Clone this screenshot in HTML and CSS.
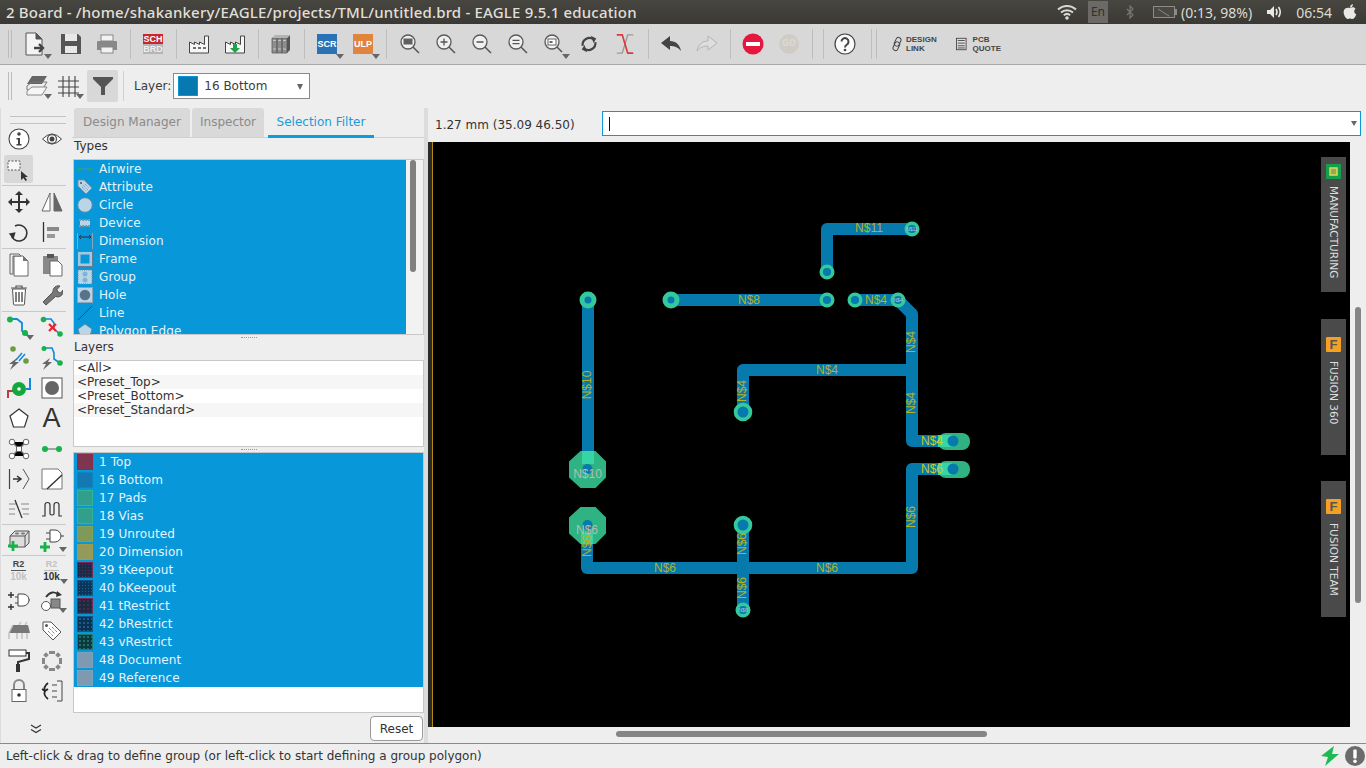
FILE: index.html
```html
<!DOCTYPE html>
<html lang="en">
<head>
<meta charset="utf-8">
<title>EAGLE Board</title>
<link rel="stylesheet" href="styles.css">
</head>
<body>
<header class="titlebar">
  <div class="title">2 Board - /home/shakankery/EAGLE/projects/TML/untitled.brd - EAGLE 9.5.1 education</div>
  <div class="tray">
    <svg class="t-wifi" width="20" height="16" viewBox="0 0 20 16"><path d="M1 5.5a13 13 0 0 1 18 0M4 8.5a9 9 0 0 1 12 0M6.8 11.2a5 5 0 0 1 6.4 0" fill="none" stroke="#d8d8d4" stroke-width="2"/><circle cx="10" cy="14" r="1.8" fill="#d8d8d4"/></svg>
    <span class="t-en">En</span>
    <svg class="t-bt" width="8" height="14" viewBox="0 0 8 14"><path d="M1 4l6 6-3 3V1l3 3-6 6" fill="none" stroke="#77766f" stroke-width="1.2"/></svg>
    <svg class="t-bat" width="24" height="14" viewBox="0 0 24 14"><rect x=".5" y="1.5" width="21" height="11" fill="#4a4944" stroke="#8c8b85"/><path d="M5 4l11 7" stroke="#8c8b85"/><rect x="22" y="4" width="2" height="6" fill="#8c8b85"/></svg>
    <span class="t-text t-pct">(0:13, 98%)</span>
    <svg class="t-snd" width="18" height="14" viewBox="0 0 18 14"><path d="M1 5h3l4-4v12l-4-4H1z" fill="#e8e8e4"/><path d="M10 4q2 3 0 6M12.5 2q3.5 5 0 10" fill="none" stroke="#e8e8e4" stroke-width="1.6"/></svg>
    <span class="t-text t-clock">06:54</span>
    <svg class="t-gear" width="14" height="16" viewBox="0 0 14 16"><path d="M7 4c2-1 4-1 5.500.8-2 1.500-1.500 4.500.8 5.400-1 2.800-2.500 4.800-4 4.800-1 0-1.500-.6-2.300-.6s-1.300.6-2.300.6C3 15 .6 11 .6 8 .6 4.500 4 3 7 4zM7 3.400C7 1.800 8.200.4 10 .2c0 1.800-1.300 3.200-3 3.200z" fill="#e8e8e4"/></svg>
  </div>
</header>

<div class="toolbar tb1">
  <i class="grip"></i>
  <button class="tb"><svg width="26" height="26" viewBox="0 0 26 26"><path d="M4 2h10l6 6v16H4z" fill="#f4f4f4" stroke="#555"/><path d="M14 2v6h6" fill="#555" stroke="#555"/><path d="M12 17h8M17 13l4 4-4 4" fill="none" stroke="#444" stroke-width="2.400"/></svg><b class="drop"></b></button>
  <button class="tb"><svg width="24" height="24" viewBox="0 0 24 24"><path d="M2 2h17l3 3v17H2z" fill="#555"/><rect x="6" y="2" width="12" height="7" fill="#e8e8e8"/><rect x="6" y="14" width="12" height="7" fill="#e8e8e8"/></svg></button>
  <button class="tb"><svg width="24" height="24" viewBox="0 0 24 24"><rect x="6" y="3" width="12" height="6" fill="#f2f2f2" stroke="#888"/><path d="M3 9h18a1 1 0 0 1 1 1v8h-4v-3H6v3H2v-8a1 1 0 0 1 1-1z" fill="#888"/><rect x="6" y="15" width="12" height="6" fill="#f2f2f2" stroke="#888"/></svg></button>
  <i class="sep"></i>
  <button class="tb"><span class="schbrd"><span class="sch">SCH</span><span class="brd">BRD</span></span></button>
  <i class="sep"></i>
  <button class="tb"><svg width="22" height="22" viewBox="0 0 22 22"><path d="M1.500 20V9l5 2.500V9l5 2.500V9l5 2.500V3h4v17z" fill="#f6f6f6" stroke="#444"/><path d="M5 15h3M10 15h3M15 15h3" stroke="#444" stroke-width="1.500"/></svg></button>
  <button class="tb"><svg width="22" height="22" viewBox="0 0 22 22"><path d="M1.500 20V9l5 2.500V9l5 2.500V9l5 2.500V3h4v17z" fill="#f6f6f6" stroke="#444"/><path d="M9 11h4v4h3l-5 5-5-5h3z" fill="#1fa34a"/></svg></button>
  <i class="sep"></i>
  <button class="tb"><svg width="20" height="20" viewBox="0 0 20 20"><path d="M1 4h5v15H1zM6 4h5v15H6zM11 4h5v15h-5z" fill="#8e8e8e" stroke="#5e5e5e" stroke-width=".8"/><path d="M2 6.500h3M7 6.500h3M12 6.500h3M2 15h3M7 15h3M12 15h3" stroke="#c4c4c4"/><path d="M16 4l3-3v15l-3 3z" fill="#555"/><path d="M1 4l3-3h15l-3 3z" fill="#b4b4b4"/></svg></button>
  <i class="sep"></i>
  <button class="tb"><span class="script scr">SCR</span><b class="drop"></b></button>
  <button class="tb"><span class="script ulp">ULP</span><b class="drop"></b></button>
  <i class="sep"></i>
  <button class="tb"><svg width="24" height="24" viewBox="0 0 24 24"><circle cx="11" cy="10" r="7" fill="#f0f0f0" stroke="#5a5a5a" stroke-width="1.300"/><rect x="6.500" y="6.500" width="9" height="6" fill="#606060"/><path d="M16 15l6 6" stroke="#555" stroke-width="1.500"/></svg></button>
  <button class="tb"><svg width="24" height="24" viewBox="0 0 24 24"><circle cx="11" cy="10" r="7" fill="#f0f0f0" stroke="#5a5a5a" stroke-width="1.300"/><path d="M7.500 10h7M11 6.500v7" stroke="#555" stroke-width="1.300"/><path d="M16 15l6 6" stroke="#555" stroke-width="1.500"/></svg></button>
  <button class="tb"><svg width="24" height="24" viewBox="0 0 24 24"><circle cx="11" cy="10" r="7" fill="#f0f0f0" stroke="#5a5a5a" stroke-width="1.300"/><path d="M7.500 10h7" stroke="#555" stroke-width="1.500"/><path d="M16 15l6 6" stroke="#555" stroke-width="1.500"/></svg></button>
  <button class="tb"><svg width="24" height="24" viewBox="0 0 24 24"><circle cx="11" cy="10" r="7" fill="#f0f0f0" stroke="#5a5a5a" stroke-width="1.300"/><path d="M7.500 8.300h7M7.500 11.700h7" stroke="#555" stroke-width="1.300"/><path d="M16 15l6 6" stroke="#555" stroke-width="1.500"/></svg></button>
  <button class="tb"><svg width="24" height="24" viewBox="0 0 24 24"><circle cx="11" cy="10" r="7" fill="#f0f0f0" stroke="#5a5a5a" stroke-width="1.300"/><rect x="7" y="7" width="8" height="6" fill="#fff" stroke="#666"/><rect x="8.500" y="9" width="3" height="2" fill="#666"/><path d="M16 15l5 5" stroke="#555" stroke-width="1.500"/></svg><b class="drop"></b></button>
  <button class="tb"><svg width="20" height="20" viewBox="0 0 22 22"><path d="M4 13a7.500 7.500 0 0 1 12-7M18 9a7.500 7.500 0 0 1-12 7" fill="none" stroke="#444" stroke-width="2.400"/><path d="M13 2l6 3-3 5zM9 20l-6-3 3-5z" fill="#444"/></svg></button>
  <button class="tb"><svg width="22" height="22" viewBox="0 0 24 24"><path d="M21 2h-6L9 22H3" fill="none" stroke="#999" stroke-width="1.500"/><path d="M3 2h6l6 20h6" fill="none" stroke="#d93a3a" stroke-width="1.800"/></svg></button>
  <i class="sep"></i>
  <button class="tb"><svg width="22" height="18" viewBox="0 0 22 18"><path d="M10 1L1 8l9 7v-4c4 0 8 1 11 5-1-6-5-10-11-10z" fill="#444"/></svg></button>
  <button class="tb"><svg width="22" height="18" viewBox="0 0 22 18"><path d="M12 1l9 7-9 7v-4c-4 0-8 1-11 5 1-6 5-10 11-10z" fill="#dedede" stroke="#b4b4b4"/></svg></button>
  <i class="sep"></i>
  <button class="tb"><svg width="22" height="22" viewBox="0 0 22 22"><circle cx="11" cy="11" r="10.500" fill="#e5173f"/><rect x="4" y="9" width="14" height="4" fill="#fff"/></svg></button>
  <button class="tb"><span class="go">GO</span></button>
  <i class="sep"></i><i class="sep sep2"></i>
  <button class="tb"><svg width="22" height="22" viewBox="0 0 22 22"><circle cx="11" cy="11" r="10" fill="#fafafa" stroke="#444" stroke-width="1.200"/><path d="M7.500 8.500a3.500 3.500 0 1 1 5.500 3c-1.400 1-2 1.500-2 3" fill="none" stroke="#444" stroke-width="2"/><circle cx="11" cy="17" r="1.300" fill="#444"/></svg></button>
  <i class="sep sep3"></i><i class="sep sep4"></i>
  <div class="linkbtn link1"><svg width="12" height="16" viewBox="0 0 12 16"><rect x="4" y="1" width="5" height="9" rx="2.500" transform="rotate(25 6 6)" fill="none" stroke="#444"/><rect x="3" y="6" width="5" height="9" rx="2.500" transform="rotate(25 6 10)" fill="none" stroke="#444"/></svg><span>DESIGN<br>LINK</span></div>
  <div class="linkbtn link2"><svg width="12" height="14" viewBox="0 0 12 14"><rect x=".5" y=".5" width="11" height="13" fill="#ddd" stroke="#444"/><path d="M2 3h8M2 6h8M2 9h8M2 11.500h8" stroke="#444"/></svg><span>PCB<br>QUOTE</span></div>
</div>

<div class="toolbar tb2">
  <i class="grip"></i>
  <button class="tb2b b1"><svg width="24" height="24" viewBox="0 0 24 24"><path d="M7 2h15l-5 8H2z" fill="#666"/><path d="M2 12l5-4h15l-5 8H2z" fill="none" stroke="#777"/><path d="M2 17l5-4h15l-5 8H2z" fill="#f6f6f6" stroke="#888"/></svg><b class="drop"></b></button>
  <button class="tb2b b2"><svg width="24" height="24" viewBox="0 0 24 24"><path d="M1 7h21M1 13h21M1 19h21M6 2v21M12 2v21M18 2v21" stroke="#444" stroke-width="1.100"/></svg><b class="drop"></b></button>
  <button class="tb2b filter"><svg width="22" height="20" viewBox="0 0 22 20"><path d="M1 1h20v2l-8 8v8H9v-8L1 3z" fill="#555"/></svg></button>
  <i class="sep sepb"></i>
  <label class="layer-label">Layer:</label>
  <div class="combo"><span class="combo-sw"></span><span class="combo-t">16 Bottom</span><b class="combo-arrow"></b></div>
</div>

<main class="main">
  <nav class="tools">
    <div class="tgrip"></div>
    <div class="tsec">
      <span class="ti"><svg width="22" height="22" viewBox="0 0 22 22"><circle cx="11" cy="11" r="10" fill="#fff" stroke="#444" stroke-width="1.100"/><circle cx="11" cy="6" r="1.800" fill="#444"/><path d="M8.500 10H12v6h1.500v1.500h-5V16H10v-4.500H8.500z" fill="#444"/></svg></span>
      <span class="ti"><svg width="22" height="16" viewBox="0 0 22 16"><path d="M1.500 8Q11-2 20.500 8 11 18 1.500 8z" fill="#fff" stroke="#444"/><circle cx="11" cy="8" r="4.500" fill="none" stroke="#555" stroke-width="1.300"/><circle cx="11" cy="8" r="2.500" fill="#444"/></svg></span>
      <span class="ti sel"><svg width="28" height="24" viewBox="0 0 28 24"><rect x="3" y="4" width="12" height="9" fill="#f6f6f6" stroke="#555" stroke-dasharray="2 1.500"/><path d="M16 14v9l2.500-2 2 3 1.500-1-2-3h3z" fill="#333"/></svg></span>
      <span class="ti"></span>
    </div>
    <hr class="thr">
    <div class="tsec">
      <span class="ti"><svg width="24" height="24" viewBox="0 0 24 24"><path d="M12 1l4 4h-3v6h6V8l4 4-4 4v-3h-6v6h3l-4 4-4-4h3v-6H5v3l-4-4 4-4v3h6V5H8z" fill="#333"/></svg></span>
      <span class="ti"><svg width="24" height="24" viewBox="0 0 24 24"><path d="M10 3v18H2z" fill="#fff" stroke="#666"/><path d="M14 3v18h8z" fill="#666" stroke="#666"/></svg></span>
      <span class="ti"><svg width="22" height="22" viewBox="0 0 22 22"><path d="M7 5a8 8 0 1 1-4 8" fill="none" stroke="#333" stroke-width="1.600"/><path d="M1 12h7l-3 6z" fill="#333" transform="rotate(-10 4 14)"/></svg></span>
      <span class="ti"><svg width="22" height="22" viewBox="0 0 22 22"><path d="M2.500 1v20" stroke="#333" stroke-width="1.300"/><rect x="6" y="6" width="12" height="4" fill="#888"/><rect x="6" y="13" width="8" height="4" fill="#999"/></svg></span>
    </div>
    <hr class="thr">
    <div class="tsec">
      <span class="ti"><svg width="22" height="24" viewBox="0 0 22 24"><path d="M6 3h9l5 5v15H6z" fill="#fff" stroke="#666"/><path d="M2 1h9l2 2H5v18H2z" fill="#eee" stroke="#666"/><path d="M15 3v5h5" fill="#777"/></svg></span>
      <span class="ti"><svg width="22" height="24" viewBox="0 0 22 24"><rect x="2" y="3" width="15" height="18" fill="#888"/><rect x="6" y="1" width="7" height="4" fill="#555"/><path d="M9 8h8l4 4v11H9z" fill="#fff" stroke="#666"/></svg></span>
      <span class="ti"><svg width="20" height="22" viewBox="0 0 20 22"><path d="M2 4h16M7 4V2h6v2" fill="none" stroke="#555" stroke-width="1.200"/><path d="M3.500 5l1 15a1 1 0 0 0 1 1h9a1 1 0 0 0 1-1l1-15z" fill="#fff" stroke="#555"/><path d="M7 8v10M10 8v10M13 8v10" stroke="#555" stroke-width="1.500"/></svg></span>
      <span class="ti"><svg width="22" height="22" viewBox="0 0 22 22"><path d="M2 18L12 8a5.500 5.500 0 0 1 7-6l-3 3.500 1 2.500 2.500 1L22 6a5.500 5.500 0 0 1-7.500 6.500L5 21z" fill="#777" stroke="#555"/></svg></span>
    </div>
    <hr class="thr">
    <div class="tsec tsec4">
      <span class="ti"><svg width="26" height="24" viewBox="0 0 26 24"><path d="M3 3h8l5 4v8l6 4" fill="none" stroke="#1188dd" stroke-width="1.800"/><circle cx="4" cy="3.500" r="3" fill="#18b24b"/><circle cx="19" cy="17" r="3" fill="#18b24b"/></svg><b class="drop"></b></span>
      <span class="ti"><svg width="24" height="24" viewBox="0 0 24 24"><path d="M3 3h8l3 4v6l6 5" fill="none" stroke="#1188dd" stroke-width="1.600"/><circle cx="3.500" cy="3.500" r="2.800" fill="#18b24b"/><circle cx="20" cy="18" r="2.800" fill="#18b24b"/><path d="M9 8l7 7M16 8l-7 7" stroke="#e8252f" stroke-width="2.200"/></svg></span>
      <span class="ti"><svg width="24" height="24" viewBox="0 0 24 24"><circle cx="6" cy="3" r="2.800" fill="#6f9a44"/><circle cx="19" cy="15" r="2.800" fill="#6f9a44"/><path d="M9 14l6-7M12 15l6-7" stroke="#1188dd" stroke-width="1.500"/><path d="M10 12L2 18h4l-3 6 9-8H8z" fill="#666"/></svg></span>
      <span class="ti"><svg width="24" height="24" viewBox="0 0 24 24"><path d="M4 2h8l2 5v6l6 4" fill="none" stroke="#1188dd" stroke-width="1.600"/><circle cx="4" cy="2.500" r="2.500" fill="#18b24b"/><circle cx="20" cy="17" r="2.800" fill="#18b24b"/><path d="M10 12L2 18h4l-3 6 9-8H8z" fill="#666"/></svg></span>
      <span class="ti"><svg width="24" height="24" viewBox="0 0 24 24"><path d="M1 22v-7h7" fill="none" stroke="#c23b3b" stroke-width="2"/><path d="M23 2v11h-4" fill="none" stroke="#1188dd" stroke-width="2"/><circle cx="12" cy="13" r="7" fill="#13a73c"/><circle cx="12" cy="13" r="1.800" fill="#fff"/></svg></span>
      <span class="ti"><svg width="22" height="22" viewBox="0 0 22 22"><rect x="1" y="1" width="20" height="20" fill="#fff" stroke="#555"/><circle cx="11" cy="11" r="7" fill="#666"/></svg></span>
      <span class="ti"><svg width="22" height="22" viewBox="0 0 22 22"><path d="M11 2l9 7-3.500 11h-11L2 9z" fill="#fff" stroke="#333" stroke-width="1.200"/></svg></span>
      <span class="ti letter">A</span>
      <span class="ti"><svg width="22" height="22" viewBox="0 0 22 22"><path d="M4 4l7 7 7-7M4 18l7-7 7 7" stroke="#777" stroke-width="1.300"/><rect x="8.500" y="8.500" width="5" height="5" fill="#fff" stroke="#666"/><circle cx="4" cy="4" r="2.800" fill="#fff" stroke="#666"/><circle cx="18" cy="4" r="2.800" fill="#fff" stroke="#666"/><circle cx="4" cy="18" r="2.800" fill="#fff" stroke="#666"/><circle cx="18" cy="18" r="2.800" fill="#fff" stroke="#666"/></svg></span>
      <span class="ti"><svg width="22" height="12" viewBox="0 0 22 12"><path d="M4 6h14" stroke="#888" stroke-width="1.500"/><circle cx="4" cy="6" r="3" fill="#18b24b"/><circle cx="18" cy="6" r="3" fill="#18b24b"/></svg></span>
      <span class="ti"><svg width="22" height="22" viewBox="0 0 22 22"><path d="M1.500 1v20" stroke="#444" stroke-width="1.200"/><path d="M5 11h7M9 8l4 3-4 3" fill="none" stroke="#333" stroke-width="1.500"/><path d="M15 1l6 10-6 10" fill="none" stroke="#555"/></svg></span>
      <span class="ti"><svg width="22" height="22" viewBox="0 0 22 22"><path d="M1 1h16l4 4v16H1z" fill="#fff" stroke="#777"/><path d="M6 21L21 7" stroke="#333" stroke-width="1.400"/></svg></span>
      <span class="ti"><svg width="22" height="20" viewBox="0 0 22 20"><path d="M1 5h8M1 10h6M1 15h6M13 5h8M14 10h7M15 15h6" stroke="#888" stroke-width="1.200"/><path d="M7 1l7 18" stroke="#333" stroke-width="1.300"/></svg></span>
      <span class="ti"><svg width="22" height="20" viewBox="0 0 22 20"><path d="M1 17h3V6a2.500 2.500 0 0 1 5 0v9a2.500 2.500 0 0 0 4 0V6a2.500 2.500 0 0 1 5 0v11h3" fill="none" stroke="#333" stroke-width="1.200"/></svg></span>
    </div>
    <hr class="thr thin">
    <div class="tsec tsec1">
      <span class="ti"><svg width="24" height="24" viewBox="0 0 24 24"><path d="M3 8l5-5h14v12l-4 4H3z" fill="#ddd" stroke="#555"/><path d="M3 8h15v11M18 8l4-5" fill="none" stroke="#555"/><ellipse cx="10" cy="5.500" rx="2" ry="1" fill="#777"/><ellipse cx="16" cy="5.500" rx="2" ry="1" fill="#777"/><path d="M1 18h10M6 13v10" stroke="#18b24b" stroke-width="2.800"/></svg></span>
      <span class="ti"><svg width="24" height="24" viewBox="0 0 24 24"><path d="M10 2h5a6 6 0 0 1 0 12h-5z" fill="#fff" stroke="#444"/><path d="M6 5h4M6 11h4M21 8h3" stroke="#444"/><path d="M0 19h10M5 14v10" stroke="#18b24b" stroke-width="2.800"/></svg><b class="drop"></b></span>
    </div>
    <hr class="thr thin">
    <div class="tsec">
      <span class="ti rv"><span class="rn">R2</span><span class="rv2 dim">10k</span></span>
      <span class="ti rv"><span class="rn dim">R2</span><span class="rv2">10k</span><b class="drop"></b></span>
      <span class="ti"><svg width="22" height="22" viewBox="0 0 22 22"><path d="M10 4h5a6 6 0 0 1 0 12h-5z" fill="#fff" stroke="#444"/><path d="M7 7h3M7 13h3M21 10h1" stroke="#444"/><path d="M0 5h6M3 2v6M0 17h6M3 14v6" stroke="#333" stroke-width="1.400"/></svg></span>
      <span class="ti"><svg width="24" height="24" viewBox="0 0 24 24"><path d="M6 8q6-8 13-2" fill="none" stroke="#333" stroke-width="1.800"/><path d="M17 2l5 4-6 2z" fill="#333"/><circle cx="6" cy="17" r="4.500" fill="#fff" stroke="#555"/><rect x="11" y="10" width="9" height="9" fill="#888" stroke="#555"/></svg><b class="drop"></b></span>
      <span class="ti"><svg width="24" height="22" viewBox="0 0 24 22"><path d="M6 5h15l2 8H2z" fill="#777"/><path d="M6 5l-4 8v6M10 13v6M15 13v6M20 13v6M12 5l2-3M18 5l2-3" stroke="#bbb" stroke-width="1.300" fill="none"/></svg></span>
      <span class="ti"><svg width="22" height="22" viewBox="0 0 22 22"><path d="M2 2h8l10 10-8 8L2 10z" fill="#fff" stroke="#555"/><circle cx="5.500" cy="5.500" r="1.500" fill="#555"/><path d="M8 8l6 6M7 11l5 5M11 7l5 5" stroke="#555" stroke-dasharray="1 1"/></svg></span>
      <span class="ti"><svg width="22" height="24" viewBox="0 0 22 24"><rect x="1" y="1" width="17" height="6" fill="#fff" stroke="#333"/><path d="M18 4h3v6L10 13v3" fill="none" stroke="#333" stroke-width="2"/><rect x="8" y="15" width="4" height="8" fill="#333"/></svg></span>
      <span class="ti"><svg width="22" height="22" viewBox="0 0 22 22"><g fill="#888"><rect x="8" y="1" width="6" height="3"/><rect x="8" y="18" width="6" height="3"/><rect x="1" y="8" width="3" height="6"/><rect x="18" y="8" width="3" height="6"/><rect x="3" y="3" width="4" height="4" transform="rotate(45 5 5)"/><rect x="15" y="3" width="4" height="4" transform="rotate(45 17 5)"/><rect x="3" y="15" width="4" height="4" transform="rotate(45 5 17)"/><rect x="15" y="15" width="4" height="4" transform="rotate(45 17 17)"/></g></svg></span>
      <span class="ti"><svg width="18" height="24" viewBox="0 0 18 24"><path d="M4 11V6a5 5 0 0 1 10 0v5" fill="none" stroke="#888" stroke-width="2"/><rect x="2" y="10.500" width="14" height="12" fill="#fff" stroke="#666"/><circle cx="9" cy="16" r="1.800" fill="#333"/></svg></span>
      <span class="ti"><svg width="22" height="22" viewBox="0 0 22 22"><path d="M16 1h5v20h-5M11 5h5M11 11h5M11 17h5" fill="none" stroke="#444"/><path d="M7 3Q2 7 4 11M4 11L1 9M4 11l3-2M7 19Q2 15 4 11" fill="none" stroke="#222" stroke-width="1.700"/></svg></span>
    </div>
    <div class="chev"><svg width="12" height="10" viewBox="0 0 12 10"><path d="M1 1l5 3 5-3M1 5.500l5 3 5-3" fill="none" stroke="#333" stroke-width="1.200"/></svg></div>
  </nav>

  <aside class="panel">
    <div class="tabs">
      <span class="tab t1">Design Manager</span>
      <span class="tab t2">Inspector</span>
      <span class="tab active">Selection Filter</span>
    </div>
    <div class="plabel plabel1">Types</div>
    <div class="typesbox">
      <ul class="blue">
        <li><svg class="ico" width="16" height="16" viewBox="0 0 16 16"><path d="M2 8h12" stroke="#5a8aa0"/><circle cx="2.500" cy="8" r="2" fill="#1fa77a"/><circle cx="13.500" cy="8" r="2" fill="#1fa77a"/></svg>Airwire</li>
        <li><svg class="ico" width="16" height="16" viewBox="0 0 16 16"><path d="M1 1h6l8 8-6 6-8-8z" fill="#b9d6e9" stroke="#6f94ac"/><circle cx="4" cy="4" r="1" fill="#456"/><path d="M6 6l5 5M5 8l4 4M8 5l4 4" stroke="#6f94ac" stroke-dasharray="1 1"/></svg>Attribute</li>
        <li><svg class="ico" width="16" height="16" viewBox="0 0 16 16"><circle cx="8" cy="8" r="7.300" fill="#b9d6e9" stroke="#5d87a3"/></svg>Circle</li>
        <li><svg class="ico" width="16" height="16" viewBox="0 0 16 16"><rect x="3" y="5" width="10" height="6" fill="#b9d6e9"/><path d="M2 5h12M2 11h12" stroke="#7c98ad" stroke-width="2" stroke-dasharray="2 1"/></svg>Device</li>
        <li><svg class="ico" width="16" height="16" viewBox="0 0 16 16"><path d="M.5 0v16M15.500 0v16" stroke="#8ba6b8"/><path d="M2 4h12M2 4l2-2M2 4l2 2M14 4l-2-2M14 4l-2 2" stroke="#234" fill="none"/></svg>Dimension</li>
        <li><svg class="ico" width="16" height="16" viewBox="0 0 16 16"><rect width="16" height="16" fill="#5f7e96"/><rect x="1" y="1" width="14" height="14" fill="#a9c6da"/><rect x="3.500" y="3.500" width="9" height="9" fill="#0897d9"/></svg>Frame</li>
        <li><svg class="ico" width="16" height="16" viewBox="0 0 16 16"><rect x="1" y="1" width="14" height="14" fill="#b9d6e9" stroke="#789" stroke-dasharray="1 1"/><circle cx="8" cy="5" r="2.500" fill="#7fb4d9"/><circle cx="8" cy="11" r="2.500" fill="#7fb4d9"/></svg>Group</li>
        <li><svg class="ico" width="16" height="16" viewBox="0 0 16 16"><rect x=".5" y=".5" width="15" height="15" fill="#b9d6e9" stroke="#8ba6b8"/><circle cx="8" cy="8" r="5.300" fill="#5b7388"/></svg>Hole</li>
        <li><svg class="ico" width="16" height="16" viewBox="0 0 16 16"><path d="M1 15L15 1" stroke="#27516f"/></svg>Line</li>
        <li><svg class="ico" width="16" height="16" viewBox="0 0 16 16"><path d="M8 1l7 5-2.500 9h-9L1 6z" fill="#b9d6e9" stroke="#5d87a3"/></svg>Polygon Edge</li>
      </ul>
      <div class="vsb"><span class="vth"></span></div>
    </div>
    <div class="split"></div>
    <div class="plabel plabel2">Layers</div>
    <ul class="presets">
      <li>&lt;All&gt;</li>
      <li>&lt;Preset_Top&gt;</li>
      <li>&lt;Preset_Bottom&gt;</li>
      <li>&lt;Preset_Standard&gt;</li>
    </ul>
    <div class="split"></div>
    <div class="layersbox">
      <ul class="blue">
        <li><span class="sw s1"></span>1 Top</li>
        <li><span class="sw s16"></span>16 Bottom</li>
        <li><span class="sw s17"></span>17 Pads</li>
        <li><span class="sw s17"></span>18 Vias</li>
        <li><span class="sw s19"></span>19 Unrouted</li>
        <li><span class="sw s20"></span>20 Dimension</li>
        <li><span class="sw s39"></span>39 tKeepout</li>
        <li><span class="sw s40"></span>40 bKeepout</li>
        <li><span class="sw s41"></span>41 tRestrict</li>
        <li><span class="sw s42"></span>42 bRestrict</li>
        <li><span class="sw s43"></span>43 vRestrict</li>
        <li><span class="sw s48"></span>48 Document</li>
        <li><span class="sw s48"></span>49 Reference</li>
      </ul>
    </div>
    <div class="pfoot"><button class="reset">Reset</button></div>
  </aside>

  <section class="work">
    <div class="cmdbar">
      <span class="coords">1.27 mm (35.09 46.50)</span>
      <div class="cmdinput"><i class="caret"></i><b class="cmdarrow"></b></div>
    </div>
    <div class="canvasrow">
      <div class="canvas">
        <svg class="board" width="922" height="585" viewBox="428 142 922 585">
          <rect x="428" y="142" width="4" height="585" fill="#2a2a2a"/>
          <path d="M432.500 142V727" stroke="#b08a10" stroke-width="1"/>
          <g fill="none" stroke="#0679ad" stroke-width="12" stroke-linejoin="round">
            <path d="M912 229H827V272"/>
            <path d="M671 300H827"/>
            <path d="M588 300V470"/>
            <path d="M855 300H898L912 314V441H953"/>
            <path d="M912 370H743V412"/>
            <path d="M953 469H912V568H587V526"/>
            <path d="M743 525V610"/>
          </g>
          <g class="pads">
            <path d="M580.500 451H595.500L606 461.500V477.500L595.500 488H580.500L569 477.500V461.500Z" fill="#2fb383"/>
            <path d="M580.500 507H595.500L606 517.500V533.500L595.500 544H580.500L569 533.500V517.500Z" fill="#2fb383"/>
            <rect x="582" y="451" width="12" height="13" fill="#35d6a4"/>
            <rect x="581" y="533" width="12" height="11" fill="#35d6a4"/>
            <circle cx="587.500" cy="469" r="5" fill="#0679ad"/>
            <circle cx="587.500" cy="525" r="5" fill="#0679ad"/>
            <rect x="938" y="433" width="32" height="17" rx="8" fill="#2fb383"/>
            <rect x="938" y="461" width="32" height="17" rx="8" fill="#2fb383"/>
            <rect x="938" y="435" width="15" height="12" fill="#35d6a4"/>
            <rect x="938" y="463" width="15" height="12" fill="#35d6a4"/>
            <circle cx="953" cy="441" r="5.500" fill="#0679ad"/>
            <circle cx="953" cy="469" r="5.500" fill="#0679ad"/>
          </g>
          <g fill="#0679ad" stroke="#33c99c" stroke-width="3.400">
            <circle cx="912" cy="229" r="5.800"/>
            <circle cx="827" cy="272" r="5.800"/>
            <circle cx="827" cy="300" r="5.800"/>
            <circle cx="855" cy="300" r="5.800"/>
            <circle cx="898" cy="300" r="5.800"/>
            <circle cx="743" cy="610" r="5.800"/>
          </g>
          <g fill="#0679ad" stroke="#33c99c" stroke-width="5">
            <circle cx="588" cy="300" r="6"/>
            <circle cx="671" cy="300" r="6"/>
          </g>
          <g fill="#0679ad" stroke="#33c99c" stroke-width="3.800">
            <circle cx="743" cy="412" r="7.400"/>
            <circle cx="743" cy="525" r="7.400"/>
          </g>
          <g class="tiny">
            <text x="912" y="231">N$11</text>
            <text x="898" y="302">N$4</text>
            <text x="743" y="612">N$6</text>
          </g>
          <g class="net">
            <text x="869" y="232">N$11</text>
            <text x="749" y="304">N$8</text>
            <text x="876" y="304">N$4</text>
            <text x="827" y="374">N$4</text>
            <text class="onpad" x="932" y="445">N$4</text>
            <text class="onpad" x="932" y="473">N$6</text>
            <text x="665" y="572">N$6</text>
            <text x="827" y="572">N$6</text>
            <text transform="translate(915 342) rotate(-90)">N$4</text>
            <text transform="translate(915 403) rotate(-90)">N$4</text>
            <text transform="translate(746 391) rotate(-90)">N$4</text>
            <text transform="translate(591 385) rotate(-90)">N$10</text>
            <text transform="translate(915 517) rotate(-90)">N$6</text>
            <text transform="translate(746 544) rotate(-90)">N$6</text>
            <text transform="translate(746 588) rotate(-90)">N$6</text>
            <text transform="translate(591 546) rotate(-90)">N$6</text>
          </g>
          <g class="net netg">
            <text x="587.500" y="478">N$10</text>
            <text x="587" y="534">N$6</text>
          </g>
        </svg>
        <div class="sidetabs">
          <div class="stab stab-m"><svg width="15" height="15" viewBox="0 0 15 15"><rect width="15" height="15" fill="#14a04a"/><rect x="4" y="4" width="7" height="7" fill="#8fae50" stroke="#d8d860" stroke-width="1.500"/></svg><span>MANUFACTURING</span></div>
          <div class="stab"><span class="fbox">F</span><span>FUSION 360</span></div>
          <div class="stab"><span class="fbox">F</span><span>FUSION TEAM</span></div>
        </div>
      </div>
      <div class="vscroll"><span class="vthumb"></span></div>
    </div>
    <div class="hscroll"><span class="hthumb"></span></div>
  </section>
</main>

<footer class="status">
  <span class="msg">Left-click &amp; drag to define group (or left-click to start defining a group polygon)</span>
  <svg class="bolt" width="20" height="20" viewBox="0 0 20 20"><path d="M14 0L1 10l7 1-3 9 14-12-7 0z" fill="#1db954"/></svg>
  <svg class="warn" width="20" height="20" viewBox="0 0 20 20"><circle cx="10" cy="10" r="10" fill="#6b6b6b"/><rect x="8.300" y="3.500" width="3.400" height="9" rx="1" fill="#fff"/><circle cx="10" cy="15.300" r="1.800" fill="#fff"/></svg>
</footer>
</body>
</html>
```

FILE: styles.css
```css
* { box-sizing: border-box; }
html, body { margin: 0; padding: 0; }
body {
  width: 1366px;
  height: 768px;
  overflow: hidden;
  background: #eeeeee;
  font-family: "DejaVu Sans", sans-serif;
  font-size: 12px;
  color: #3c3c3c;
  display: flex;
  flex-direction: column;
}
ul { list-style: none; margin: 0; padding: 0; }
button { border: 0; background: none; padding: 0; font: inherit; }

/* title bar */
.titlebar {
  height: 24px;
  flex: none;
  display: flex;
  align-items: center;
  background: linear-gradient(#47463f, #3a3935);
  color: #e0dfd8;
}
.title {
  margin-left: 6px;
  font-family: "Noto Sans", sans-serif;
  font-weight: 500;
  font-size: 15px;
  letter-spacing: .18px;
  white-space: nowrap;
}
.tray { margin-left: auto; display: flex; align-items: center; height: 24px; }
.t-wifi { margin-right: 11px; }
.t-en {
  width: 20px; height: 22px; line-height: 22px; text-align: center;
  background: #6b6a66; color: #2f2f2c; font-size: 12px;
  font-family: "Noto Sans", sans-serif;
  margin-right: 18px;
}
.t-bt { margin-right: 19px; }
.t-bat { margin-right: 4px; }
.t-text { font-family: "Noto Sans", sans-serif; font-size: 14px; color: #dcdbd4; white-space: nowrap; }
.t-snd { margin: 0 12px 0 14px; }
.t-clock { margin-right: 11px; }
.t-gear { margin-right: 9px; }

/* toolbars */
.toolbar { flex: none; display: flex; align-items: center; position: relative; }
.tb1 { height: 41px; background: #d8d8d8; border-bottom: 1px solid #a9a9a9; padding-left: 8px; }
.tb2 { height: 42px; background: #eeeeee; padding-left: 8px; }
.grip { width: 4px; height: 28px; border-left: 1px solid #bbb; border-right: 1px solid #bbb; flex: none; margin-right: 5px; }
.tb {
  width: 36px; height: 36px; flex: none; position: relative;
  display: flex; align-items: center; justify-content: center;
}
.sep { width: 1px; height: 30px; background: #bdbdbd; margin: 0 4px 0 5px; flex: none; }
.sep2 { margin: 0 3px 0 6px; }
.sep3 { margin: 0 4px 0 8px; }
.sep4 { margin: 0 14px 0 0; }
.drop {
  position: absolute; right: 1px; bottom: 3px;
  width: 0; height: 0;
  border-left: 4px solid transparent; border-right: 4px solid transparent; border-top: 5px solid #666;
}
.schbrd { width: 20px; display: block; font-family: "Liberation Sans", sans-serif; font-size: 9px; line-height: 10px; text-align: center; font-weight: bold; }
.sch { display: block; background: #c8262c; color: #fff; }
.brd { display: block; background: #b5b5b5; color: #eee; }
.script { width: 20px; height: 20px; display: block; color: #fff; font-family: "Liberation Sans", sans-serif; font-size: 9px; line-height: 20px; text-align: center; font-weight: bold; }
.scr { background: #2a72b8; }
.ulp { background: #e0843e; }
.go {
  width: 20px; height: 20px; border-radius: 50%; background: #cfccc6; color: #dcd9d4;
  font-size: 8px; line-height: 20px; text-align: center; font-weight: bold; display: block;
}
.linkbtn {
  display: flex; align-items: center; gap: 3px; flex: none;
  font-family: "Liberation Sans", sans-serif; font-size: 8px; line-height: 9px; font-weight: bold; color: #444;
}
.link1 { width: 46px; margin-right: 19px; }
.link2 { width: 45px; gap: 6px; }
.tb2b { width: 32px; height: 32px; flex: none; position: relative; display: flex; align-items: center; justify-content: center; }
.b1 { margin: 0 0 0 4px; }
.filter { background: #d8d8d8; border-radius: 2px; width: 31px; margin-left: 2px; }
.sepb { height: 30px; margin: 0 0 0 5px; background: #cfcfcf; }
.layer-label { margin: 0 2px 0 10px; font-size: 12px; color: #3c3c3c; }
.combo {
  width: 137px; height: 26px; background: #fff; border: 1px solid #8a8a8a;
  display: flex; align-items: center; position: relative; padding-left: 4px;
}
.combo-sw { width: 20px; height: 20px; background: #0779b0; border: 1px solid #0896d8; flex: none; }
.combo-t { margin-left: 6px; font-size: 12px; }
.combo-arrow { position: absolute; right: 6px; top: 10px; width: 0; height: 0; border-left: 3.500px solid transparent; border-right: 3.500px solid transparent; border-top: 6px solid #666; }

/* main */
.main { flex: none; height: 636px; display: flex; padding-top: 1px; }
.tools { width: 72px; flex: none; border-left: 1px solid #dcdcdc; display: flex; flex-direction: column; padding-left: 1px; }
.tgrip { height: 16px; margin: 0 6px 0 8px; border-bottom: 1px solid #c4c4c4; position: relative; flex: none; }
.tgrip::before { content: ""; position: absolute; left: 0; right: 0; top: 8px; height: 1px; background: #c4c4c4; }
.tsec { display: grid; grid-template-columns: 33px 33px; grid-auto-rows: 30px; flex: none; }
.tsec4 { grid-auto-rows: 30.14px; }
.ti { display: flex; align-items: center; justify-content: center; position: relative; font-family: "Liberation Sans", sans-serif; }
.sel { background: #d8d8d8; border-radius: 2px; height: 28px; width: 29px; margin: 1px 0 0 2px; }
.thr { border: 0; border-top: 1px solid #c8c8c8; height: 1px; margin: 1px 6px 1px 0; flex: none; }
.thr.thin { margin: 0 6px 0 0; }
.letter { font-size: 27px; color: #333; font-weight: 500; }
.rv { flex-direction: column; font-size: 9px; line-height: 9px; font-weight: bold; }
.rn { color: #444; border-bottom: 1px solid #555; padding: 0 2px 1px; }
.rv2 { color: #333; font-size: 10px; padding-top: 1px; }
.rv .dim { color: #c2c2c2; border-color: #bbb; }
.rv .drop { right: 0; bottom: 2px; }
.chev { flex: 1; display: flex; align-items: center; justify-content: center; padding: 10px 2px 0 0; }

/* panel */
.panel { width: 352px; flex: none; display: flex; flex-direction: column; font-size: 12px; }
.tabs { height: 30px; flex: none; display: flex; align-items: stretch; padding-left: 2px; border-bottom: 1px solid #d0d0d0; }
.tab { display: flex; align-items: center; justify-content: center; color: #8a8a8a; background: #d9d9d9; height: 29px; padding-bottom: 2px; border-radius: 3px 3px 0 0; }
.t1 { width: 116px; }
.t2 { width: 72px; margin-left: 2px; }
.tab.active { width: 110px; color: #1a9bdc; background: #eee; position: relative; padding-left: 4px; }
.tab.active::after { content: ""; position: absolute; left: 4px; right: 0; bottom: -1px; height: 3px; background: #0d9ddf; }
.plabel { flex: none; height: 21px; padding-left: 2px; padding-top: 1px; line-height: 15px; color: #333; }
.plabel2 { height: 20px; padding-top: 0; line-height: 14px; }
.typesbox { height: 176px; flex: none; margin-left: 1px; border: 1px solid #c8c8c8; display: flex; background: #fff; overflow: hidden; width: 351px; }
.blue { background: #0897d9; color: #e6f4fb; }
.blue li { height: 18px; line-height: 18px; display: flex; align-items: center; padding-left: 3px; white-space: nowrap; letter-spacing: .1px; }
.typesbox .blue { width: 332px; flex: none; overflow: hidden; }
.ico, .sw { flex: none; margin-right: 6px; width: 16px; height: 16px; }
.vsb { flex: 1; position: relative; background: #f2f2f2; }
.vth { position: absolute; left: 4px; top: 0; width: 6px; height: 112px; border-radius: 3px; background: #808080; }
.split { height: 5px; flex: none; position: relative; }
.split::after { content: ""; position: absolute; left: 169px; top: 2px; width: 16px; height: 1px; border-top: 1px dotted #999; }
.presets { height: 87px; flex: none; margin-left: 1px; width: 351px; background: #fff; border: 1px solid #c8c8c8; padding: 0; line-height: 14px; color: #333; }
.presets li { height: 14px; padding-left: 3px; }
.presets li:nth-child(even) { background: #f6f6f6; }
.layersbox { height: 261px; flex: none; margin-left: 1px; width: 351px; background: #fff; border: 1px solid #c8c8c8; }
.sw { border: 1px solid; margin-left: 0; }
.s1 { background: #7f3450; border-color: #8d2c4a; }
.s16 { background: #1479b2; border-color: #0f84c2; }
.s17 { background: #319f8c; border-color: #33b590; }
.s19 { background: #7f9a58; border-color: #82a24f; }
.s20 { background: #949a5c; border-color: #a49a4c; }
.s39 { background: #1c2c48 radial-gradient(#5a2c58 30%, transparent 35%) 0 0 / 3px 3px; border-color: #7a2a50; }
.s40 { background: #0c3558 radial-gradient(#16699a 35%, transparent 40%) 0 0 / 3px 3px; border-color: #0f5a88; }
.s41 { background: #1a2a40 radial-gradient(#4a2c48 25%, transparent 30%) 0 0 / 4px 4px; border-color: #7a2a50; }
.s42 { background: #0c3050 radial-gradient(#155f90 25%, transparent 30%) 0 0 / 4px 4px; border-color: #0f5a88; }
.s43 { background: #0c3840 radial-gradient(#1f7068 25%, transparent 30%) 0 0 / 4px 4px; border-color: #1f7a70; }
.s48 { background: #7f9ab0; border-color: #7aa2ba; }
.pfoot { flex: 1; display: flex; justify-content: flex-end; align-items: flex-start; padding-top: 3px; }
.reset { width: 53px; height: 25px; background: #fff; border: 1px solid #9a9a9a; border-radius: 4px; font-size: 12px; color: #333; margin-right: 1px; }

/* work area */
.work { flex: 1; border-left: 4px solid #dcdcdc; display: flex; flex-direction: column; min-width: 0; }
.cmdbar { height: 34px; flex: none; display: flex; align-items: center; margin-left: 1px; }
.coords { margin-left: 6px; width: 167px; flex: none; font-size: 12px; color: #333; padding-bottom: 1px; }
.cmdinput { width: 759px; height: 25px; margin-top: -4px; background: #fff; border: 1px solid #0d97d9; position: relative; flex: none; }
.caret { position: absolute; left: 6px; top: 5px; width: 1px; height: 14px; background: #111; }
.cmdarrow { position: absolute; right: 3px; top: 9px; width: 0; height: 0; border-left: 3px solid transparent; border-right: 3px solid transparent; border-top: 5px solid #666; }
.canvasrow { height: 585px; flex: none; display: flex; }
.canvas { width: 922px; height: 585px; background: #000; position: relative; flex: none; overflow: hidden; }
.board { display: block; }
.net text {
  font-family: "Liberation Sans", sans-serif; font-size: 12px; fill: #b0b32a; text-anchor: middle;
}
.net .onpad { fill: #c8cc28; }
.netg text { fill: #b4bdb4; }
.tiny text { font-family: "Liberation Sans", sans-serif; font-size: 5px; fill: #b9c8d6; text-anchor: middle; }
.sidetabs { position: absolute; left: 893px; top: 15px; width: 25px; display: flex; flex-direction: column; gap: 27px; }
.stab {
  width: 25px; height: 136px; background: #4a4a4a; color: #dedede;
  display: flex; flex-direction: column; align-items: center; padding-top: 18px; gap: 9px;
}
.stab-m { height: 135px; padding-top: 7px; gap: 7px; }
.stab:nth-child(3) { margin-top: -1px; }
.stab span:last-child { writing-mode: vertical-rl; font-family: "DejaVu Sans", sans-serif; font-size: 10.600px; white-space: nowrap; }
.fbox { width: 15px; height: 15px; background: #f5a01f; color: #555; font: bold 13px/15px "Liberation Sans", sans-serif; text-align: center; flex: none; border-radius: 1px; }
.vscroll { flex: 1; position: relative; }
.vthumb { position: absolute; left: 5px; top: 165px; width: 6px; height: 296px; border-radius: 3px; background: #858585; }
.hscroll { height: 16px; flex: none; position: relative; }
.hthumb { position: absolute; left: 188px; top: 4px; width: 371px; height: 6px; border-radius: 3px; background: #858585; }

/* status */
.status {
  flex: 1; display: flex; align-items: center; border-top: 1px solid #8a8a8a;
  padding: 0 1px 0 6px; font-size: 12px; color: #333;
}
.msg { flex: 1; white-space: nowrap; }
.bolt { margin-right: 5px; }
```
